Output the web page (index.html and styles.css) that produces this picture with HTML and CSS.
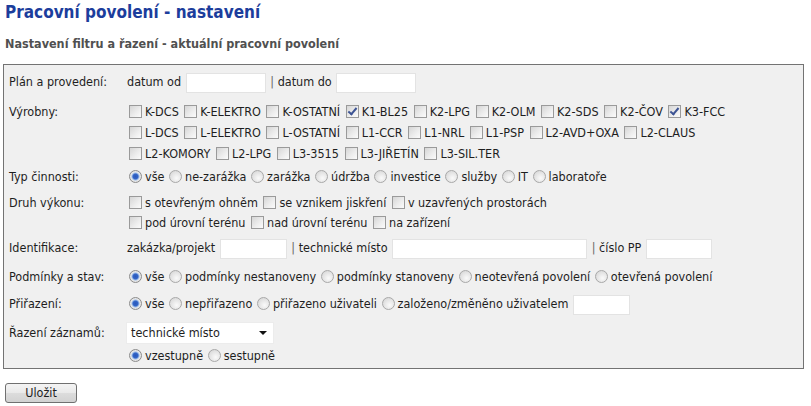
FILE: index.html
```html
<!DOCTYPE html>
<html lang="cs">
<head>
<meta charset="utf-8">
<title>Pracovní povolení - nastavení</title>
<link rel="stylesheet" href="styles.css">
</head>
<body>
<h1 class="title">Pracovní povolení - nastavení</h1>
<h2 class="subtitle">Nastavení filtru a řazení - aktuální pracovní povolení</h2>
<div class="box">
  <div class="row r-plan">
    <div class="lbl">Plán a provedení:</div>
    <div class="val">datum od <input class="txt w80" type="text"> <span class="sep">|</span> datum do <input class="txt w80" type="text"></div>
  </div>
  <div class="row r-vyr">
    <div class="lbl">Výrobny:</div>
    <div class="val lines">
      <div class="line"><label class="opt"><input type="checkbox" class="cb">K-DCS</label> <label class="opt"><input type="checkbox" class="cb">K-ELEKTRO</label> <label class="opt"><input type="checkbox" class="cb">K-OSTATNÍ</label> <label class="opt"><input type="checkbox" class="cb" checked>K1-BL25</label> <label class="opt"><input type="checkbox" class="cb">K2-LPG</label> <label class="opt"><input type="checkbox" class="cb">K2-OLM</label> <label class="opt"><input type="checkbox" class="cb">K2-SDS</label> <label class="opt"><input type="checkbox" class="cb">K2-ČOV</label> <label class="opt"><input type="checkbox" class="cb" checked>K3-FCC</label></div>
      <div class="line"><label class="opt"><input type="checkbox" class="cb">L-DCS</label> <label class="opt"><input type="checkbox" class="cb">L-ELEKTRO</label> <label class="opt"><input type="checkbox" class="cb">L-OSTATNÍ</label> <label class="opt"><input type="checkbox" class="cb">L1-CCR</label> <label class="opt"><input type="checkbox" class="cb">L1-NRL</label> <label class="opt"><input type="checkbox" class="cb">L1-PSP</label> <label class="opt"><input type="checkbox" class="cb">L2-AVD+OXA</label> <label class="opt"><input type="checkbox" class="cb">L2-CLAUS</label></div>
      <div class="line"><label class="opt"><input type="checkbox" class="cb">L2-KOMORY</label> <label class="opt"><input type="checkbox" class="cb">L2-LPG</label> <label class="opt"><input type="checkbox" class="cb">L3-3515</label> <label class="opt"><input type="checkbox" class="cb">L3-JIŘETÍN</label> <label class="opt"><input type="checkbox" class="cb">L3-SIL.TER</label></div>
    </div>
  </div>
  <div class="row r-typ">
    <div class="lbl">Typ činnosti:</div>
    <div class="val"><label class="opt"><input type="radio" class="rb" name="typ" checked>vše</label> <label class="opt"><input type="radio" class="rb" name="typ">ne-zarážka</label> <label class="opt"><input type="radio" class="rb" name="typ">zarážka</label> <label class="opt"><input type="radio" class="rb" name="typ">údržba</label> <label class="opt"><input type="radio" class="rb" name="typ">investice</label> <label class="opt"><input type="radio" class="rb" name="typ">služby</label> <label class="opt"><input type="radio" class="rb" name="typ">IT</label> <label class="opt"><input type="radio" class="rb" name="typ">laboratoře</label></div>
  </div>
  <div class="row r-druh">
    <div class="lbl">Druh výkonu:</div>
    <div class="val lines">
      <div class="line"><label class="opt"><input type="checkbox" class="cb">s otevřeným ohněm</label> <label class="opt"><input type="checkbox" class="cb">se vznikem jiskření</label> <label class="opt"><input type="checkbox" class="cb">v uzavřených prostorách</label></div>
      <div class="line"><label class="opt"><input type="checkbox" class="cb">pod úrovní terénu</label> <label class="opt"><input type="checkbox" class="cb">nad úrovní terénu</label> <label class="opt"><input type="checkbox" class="cb">na zařízení</label></div>
    </div>
  </div>
  <div class="row r-ident">
    <div class="lbl">Identifikace:</div>
    <div class="val">zakázka/projekt <input class="txt w67" type="text"> <span class="sep">|</span> technické místo <input class="txt w195" type="text"> <span class="sep">|</span> číslo PP <input class="txt w66" type="text"></div>
  </div>
  <div class="row r-podm">
    <div class="lbl">Podmínky a stav:</div>
    <div class="val"><label class="opt"><input type="radio" class="rb" name="podm" checked>vše</label> <label class="opt"><input type="radio" class="rb" name="podm">podmínky nestanoveny</label> <label class="opt"><input type="radio" class="rb" name="podm">podmínky stanoveny</label> <label class="opt"><input type="radio" class="rb" name="podm">neotevřená povolení</label> <label class="opt"><input type="radio" class="rb" name="podm">otevřená povolení</label></div>
  </div>
  <div class="row r-prir">
    <div class="lbl">Přiřazení:</div>
    <div class="val"><label class="opt"><input type="radio" class="rb" name="prir" checked>vše</label> <label class="opt"><input type="radio" class="rb" name="prir">nepřiřazeno</label> <label class="opt"><input type="radio" class="rb" name="prir">přiřazeno uživateli</label> <label class="opt"><input type="radio" class="rb" name="prir">založeno/změněno uživatelem</label> <input class="txt w57" type="text"></div>
  </div>
  <div class="row r-raz">
    <div class="lbl">Řazení záznamů:</div>
    <div class="val lines">
      <div class="line sel-line"><div class="select"><span class="sel-text">technické místo</span><span class="sel-arrow"></span></div></div>
      <div class="line"><label class="opt"><input type="radio" class="rb" name="raz" checked>vzestupně</label> <label class="opt"><input type="radio" class="rb" name="raz">sestupně</label></div>
    </div>
  </div>
</div>
<div class="actions"><button class="btn" type="button">Uložit</button></div>
</body>
</html>
```

FILE: styles.css
```css
html, body {
  background: #ffffff;
}
body {
  margin: 0;
  padding: 0 5px;
  font-family: "DejaVu Sans Condensed", "DejaVu Sans", sans-serif;
  font-stretch: condensed;
  font-size: 12.5px;
  color: #1e1e1e;
}
.title {
  margin: 1px 0 0;
  font-size: 17px;
  line-height: 22px;
  font-weight: bold;
  color: #1c3d9c;
}
.subtitle {
  margin: 13px 0 0;
  font-size: 12.5px;
  line-height: 16px;
  font-weight: bold;
  color: #505050;
}
.box {
  margin: 12px 0 0 -2px;
  width: 801px;
  box-sizing: border-box;
  border: 1px solid #737373;
  background: #f0f0f0;
  padding: 6px 5px 1px;
}
.row {
  display: flex;
  align-items: flex-start;
}
.r-vyr { margin-top: 8px; }
.r-typ { margin-top: 2px; }
.r-druh { margin-top: 5px; }
.r-ident { margin-top: 4px; }
.r-podm { margin-top: 7px; }
.r-prir { margin-top: 5px; }
.r-raz { margin-top: 6px; }
.lbl {
  width: 118px;
  flex: none;
  line-height: 22px;
}
.val {
  flex: 1;
  line-height: 22px;
  white-space: nowrap;
}
.r-vyr .line, .r-vyr .lbl {
  line-height: 21px;
}
.r-druh .line, .r-druh .lbl {
  line-height: 20px;
}
.r-raz .line {
  line-height: 22px;
}
.r-raz .lbl {
  line-height: 24px;
}
.opt {
  white-space: nowrap;
}
.cb {
  -webkit-appearance: none;
  appearance: none;
  width: 13px;
  height: 13px;
  margin: 0 3px 0 2px;
  vertical-align: -2px;
  box-sizing: border-box;
  border: 1px solid #9a9a9a;
  background: linear-gradient(135deg, #d6d6d6 0%, #eeeeee 60%, #fbfbfb 100%);
  position: relative;
}
.cb:checked::after {
  content: "";
  position: absolute;
  left: 3px;
  top: 0px;
  width: 3px;
  height: 7px;
  border: solid #3d5494;
  border-width: 0 2px 2px 0;
  transform: rotate(40deg);
}
.rb {
  -webkit-appearance: none;
  appearance: none;
  width: 13px;
  height: 13px;
  margin: 0 3px 0 1px;
  vertical-align: -2px;
  box-sizing: border-box;
  border: 1px solid #a8a8a8;
  border-radius: 50%;
  background: radial-gradient(circle at 60% 65%, #fafafa 0%, #e4e4e4 55%, #d0d0d0 100%);
  position: relative;
}
.val > .opt:first-child .rb,
.line > .opt:first-child .rb {
  margin-left: 2px;
}
.rb:checked {
  background: radial-gradient(circle at 50% 50%, #2a57b8 0, #3466c8 2.5px, #9bbbe8 3.5px, #e8e8e8 4.5px, #d8d8d8 100%);
  border-color: #8c8c8c;
}
.txt {
  height: 20px;
  box-sizing: border-box;
  border: 1px solid #e3e3e3;
  background: #ffffff;
  padding: 0 2px;
  margin: 0 1px;
  vertical-align: middle;
  font: inherit;
}
.w80 { width: 80px; }
.w67 { width: 67px; }
.w195 { width: 195px; }
.w66 { width: 66px; }
.w57 { width: 57px; }
.sep {
  color: #666666;
}
.sel-line {
  height: 24px;
}
.select {
  display: inline-flex;
  align-items: center;
  justify-content: space-between;
  width: 148px;
  height: 22px;
  box-sizing: border-box;
  margin: 1px 0 0 -1px;
  padding: 0 6px 0 4px;
  background: #ffffff;
  border: 1px solid #ececec;
  vertical-align: top;
  line-height: 20px;
}
.sel-arrow {
  width: 0;
  height: 0;
  border-left: 4px solid transparent;
  border-right: 4px solid transparent;
  border-top: 4px solid #111111;
}
.actions {
  margin-top: 14px;
}
.btn {
  width: 72px;
  height: 20px;
  box-sizing: border-box;
  border: 1px solid #707070;
  border-radius: 3px;
  background: linear-gradient(#f4f4f4, #e9e9e9 50%, #dcdcdc 51%, #d2d2d2);
  font: inherit;
  color: #1e1e1e;
  padding: 0;
  line-height: 18px;
}
```
